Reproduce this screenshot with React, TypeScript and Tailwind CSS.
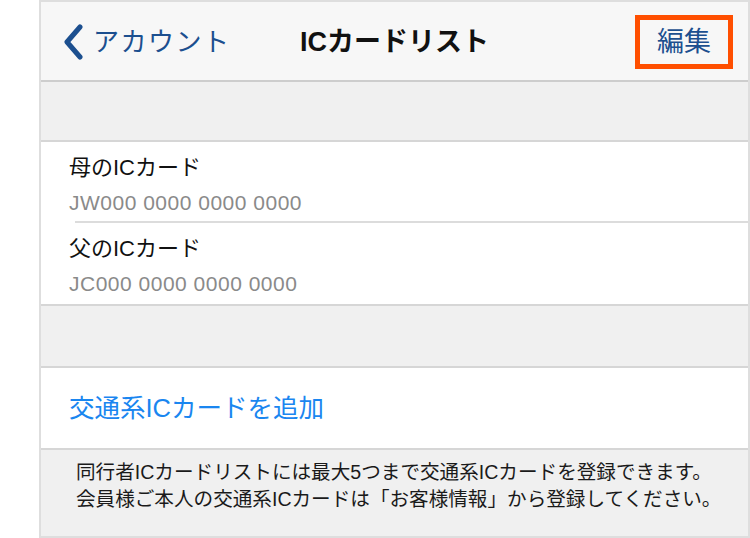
import React from 'react';

const font = { fontFamily: '"Liberation Sans", "Noto Sans CJK JP", sans-serif' };

const BackChevron: React.FC = () => (
  <svg width="22" height="36" viewBox="0 0 22 36" className="mr-2">
    <path d="M17 3 L4 18 L17 33" fill="none" stroke="#1c4f8f" strokeWidth="5" strokeLinecap="round" strokeLinejoin="round" />
  </svg>
);

const CardRow: React.FC<{ name: string; number: string; last?: boolean }> = ({ name, number, last }) => (
  <div className="bg-white pl-[28px] relative h-[81px] pt-[12px]">
    <p className="text-[22px] leading-[28px] text-[#111]">{name}</p>
    <p className="text-[21px] leading-[26px] text-[#8a8a8a] mt-[8px] tracking-[0.5px]">{number}</p>
    {!last && <div className="absolute bottom-0 left-[34px] right-0 h-[2px] bg-[#dcdcdc]" />}
  </div>
);

export default function App() {
  return (
    <div className="w-[750px] h-[538px] bg-white" style={font}>
      <div className="ml-[39px] w-[711px] h-[538px] border-2 border-[#dedede] flex flex-col">
        <header className="h-[80px] shrink-0 pt-[2px] bg-[#f7f7f7] border-b-2 border-[#cdcdcd] flex items-center relative">
          <div className="flex items-center pl-[22px] text-[#1c4f8f]">
            <BackChevron />
            <span className="text-[26px] tracking-[1.5px]">アカウント</span>
          </div>
          <h1 className="absolute left-0 right-0 text-center text-[27px] font-bold text-[#111] pointer-events-none">
            ICカードリスト
          </h1>
          <div className="ml-auto mr-[15px] border-[5px] border-[#ff4f00] w-[98px] h-[54px] flex items-center justify-center">
            <span className="text-[27px] text-[#1c4f8f]">編集</span>
          </div>
        </header>
        <div className="h-[60px] shrink-0 bg-[#f0f0f0] border-b-2 border-[#d6d6d6]" />
        <CardRow name="母のICカード" number="JW000 0000 0000 0000" />
        <CardRow name="父のICカード" number="JC000 0000 0000 0000" last />
        <div className="h-[64px] shrink-0 bg-[#f0f0f0] border-t-2 border-b-2 border-[#d6d6d6]" />
        <div className="h-[80px] shrink-0 bg-white flex items-center pl-[28px]">
          <span className="text-[25.5px] text-[#1a86f0]">交通系ICカードを追加</span>
        </div>
        <div className="flex-1 bg-[#f0f0f0] border-t-2 border-[#d6d6d6] pl-[35px] pt-[9px] text-[19.6px] leading-[27px] text-[#1a1a1a]">
          <p>同行者ICカードリストには最大5つまで交通系ICカードを登録できます。</p>
          <p>会員様ご本人の交通系ICカードは「お客様情報」から登録してください。</p>
        </div>
      </div>
    </div>
  );
}
